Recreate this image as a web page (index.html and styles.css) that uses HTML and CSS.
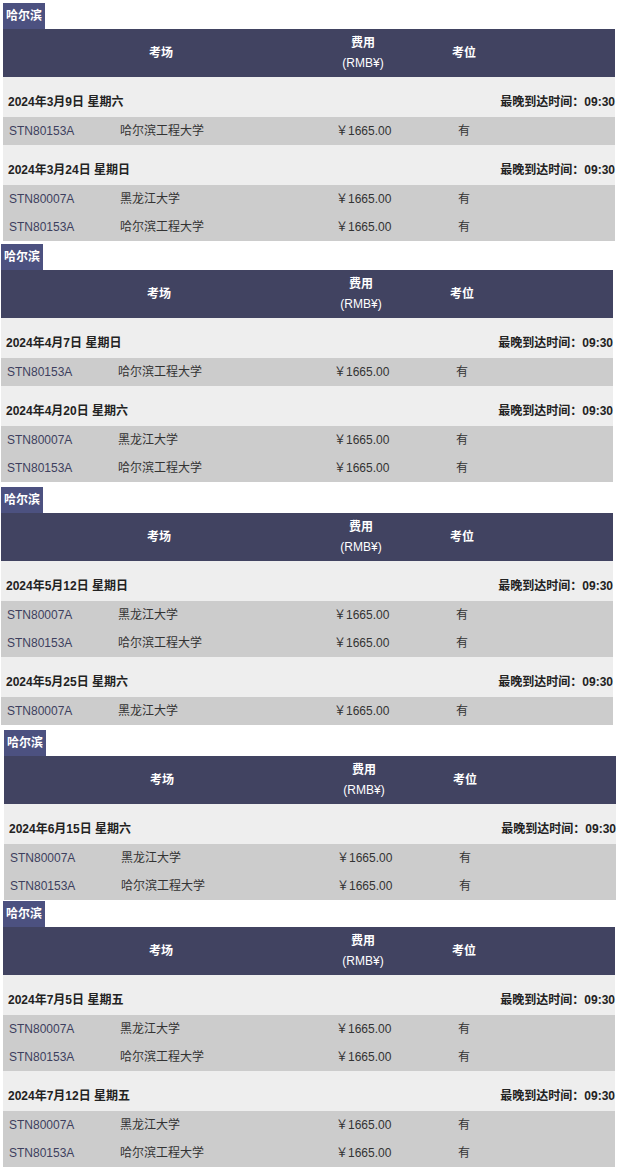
FILE: index.html
```html
<!DOCTYPE html>
<html lang="zh-CN">

<head>
    <meta charset="UTF-8">
    <meta name="viewport" content="width=device-width, initial-scale=1.0">
    <title>考场信息</title>
    <link rel="stylesheet" href="styles.css">
</head>

<body>
    <!-- Block 1 -->
    <div class="city-block b1">
        <div class="city-tag">哈尔滨</div>
        <div class="table-head">
            <div>考场</div>
            <div>费用<br><span class="unit">(RMB¥)</span></div>
            <div>考位</div>
            <div></div>
        </div>
        <div class="date-row"><span>2024年3月9日 星期六</span><span>最晚到达时间：09:30</span></div>
        <div class="seat-row"><span class="code">STN80153A</span><span>哈尔滨工程大学</span><span>￥1665.00</span><span>有</span></div>
        <div class="date-row"><span>2024年3月24日 星期日</span><span>最晚到达时间：09:30</span></div>
        <div class="seat-row"><span class="code">STN80007A</span><span>黑龙江大学</span><span>￥1665.00</span><span>有</span></div>
        <div class="seat-row"><span class="code">STN80153A</span><span>哈尔滨工程大学</span><span>￥1665.00</span><span>有</span></div>
    </div>

    <!-- Block 2 -->
    <div class="city-block b2">
        <div class="city-tag">哈尔滨</div>
        <div class="table-head">
            <div>考场</div>
            <div>费用<br><span class="unit">(RMB¥)</span></div>
            <div>考位</div>
            <div></div>
        </div>
        <div class="date-row"><span>2024年4月7日 星期日</span><span>最晚到达时间：09:30</span></div>
        <div class="seat-row"><span class="code">STN80153A</span><span>哈尔滨工程大学</span><span>￥1665.00</span><span>有</span></div>
        <div class="date-row"><span>2024年4月20日 星期六</span><span>最晚到达时间：09:30</span></div>
        <div class="seat-row"><span class="code">STN80007A</span><span>黑龙江大学</span><span>￥1665.00</span><span>有</span></div>
        <div class="seat-row"><span class="code">STN80153A</span><span>哈尔滨工程大学</span><span>￥1665.00</span><span>有</span></div>
    </div>

    <!-- Block 3 -->
    <div class="city-block b3">
        <div class="city-tag">哈尔滨</div>
        <div class="table-head">
            <div>考场</div>
            <div>费用<br><span class="unit">(RMB¥)</span></div>
            <div>考位</div>
            <div></div>
        </div>
        <div class="date-row"><span>2024年5月12日 星期日</span><span>最晚到达时间：09:30</span></div>
        <div class="seat-row"><span class="code">STN80007A</span><span>黑龙江大学</span><span>￥1665.00</span><span>有</span></div>
        <div class="seat-row"><span class="code">STN80153A</span><span>哈尔滨工程大学</span><span>￥1665.00</span><span>有</span></div>
        <div class="date-row"><span>2024年5月25日 星期六</span><span>最晚到达时间：09:30</span></div>
        <div class="seat-row"><span class="code">STN80007A</span><span>黑龙江大学</span><span>￥1665.00</span><span>有</span></div>
    </div>

    <!-- Block 4 -->
    <div class="city-block b4">
        <div class="city-tag">哈尔滨</div>
        <div class="table-head">
            <div>考场</div>
            <div>费用<br><span class="unit">(RMB¥)</span></div>
            <div>考位</div>
            <div></div>
        </div>
        <div class="date-row"><span>2024年6月15日 星期六</span><span>最晚到达时间：09:30</span></div>
        <div class="seat-row"><span class="code">STN80007A</span><span>黑龙江大学</span><span>￥1665.00</span><span>有</span></div>
        <div class="seat-row"><span class="code">STN80153A</span><span>哈尔滨工程大学</span><span>￥1665.00</span><span>有</span></div>
    </div>

    <!-- Block 5 -->
    <div class="city-block b5">
        <div class="city-tag">哈尔滨</div>
        <div class="table-head">
            <div>考场</div>
            <div>费用<br><span class="unit">(RMB¥)</span></div>
            <div>考位</div>
            <div></div>
        </div>
        <div class="date-row"><span>2024年7月5日 星期五</span><span>最晚到达时间：09:30</span></div>
        <div class="seat-row"><span class="code">STN80007A</span><span>黑龙江大学</span><span>￥1665.00</span><span>有</span></div>
        <div class="seat-row"><span class="code">STN80153A</span><span>哈尔滨工程大学</span><span>￥1665.00</span><span>有</span></div>
        <div class="date-row"><span>2024年7月12日 星期五</span><span>最晚到达时间：09:30</span></div>
        <div class="seat-row"><span class="code">STN80007A</span><span>黑龙江大学</span><span>￥1665.00</span><span>有</span></div>
        <div class="seat-row"><span class="code">STN80153A</span><span>哈尔滨工程大学</span><span>￥1665.00</span><span>有</span></div>
    </div>
</body>

</html>
```

FILE: styles.css
```css
/* General Styles */
body {
    margin: 0;
    font-family: "Liberation Sans", "Noto Sans CJK SC", sans-serif;
    font-size: 12px;
    color: #333;
    background: #fff;
}

/* City Blocks (screenshots were stitched, so each one sits a bit off) */
.city-block {
    width: 612px;
}

.b1 { margin: 3px 0 0 3px; }
.b2 { margin: 3px 0 0 1px; }
.b3 { margin: 5px 0 0 1px; }
.b4 { margin: 5px 0 0 4px; }
.b5 { margin: 1px 0 0 3px; }

/* City Tag */
.city-tag {
    display: inline-block;
    height: 26px;
    line-height: 26px;
    padding: 0 3px;
    background: #4c5180;
    color: #fff;
    font-weight: bold;
    vertical-align: top;
}

/* Table Head */
.table-head {
    display: grid;
    grid-template-columns: 316px 88px 114px 1fr;
    align-items: center;
    height: 48px;
    background: #414361;
    color: #fff;
    font-weight: bold;
    text-align: center;
    line-height: 20px;
}

.table-head .unit {
    font-weight: normal;
}

/* Date Row */
.date-row {
    display: flex;
    justify-content: space-between;
    height: 40px;
    box-sizing: border-box;
    padding: 17px 0 7px 5px;
    line-height: 16px;
    background: #eeeeee;
    color: #222;
    font-weight: bold;
}

/* Seat Row */
.seat-row {
    display: grid;
    grid-template-columns: 111px 216px 122px 1fr;
    height: 28px;
    line-height: 28px;
    background: #cccccc;
}

.seat-row span {
    padding-left: 6px;
}

.seat-row .code {
    color: #3d3f5e;
}
```
